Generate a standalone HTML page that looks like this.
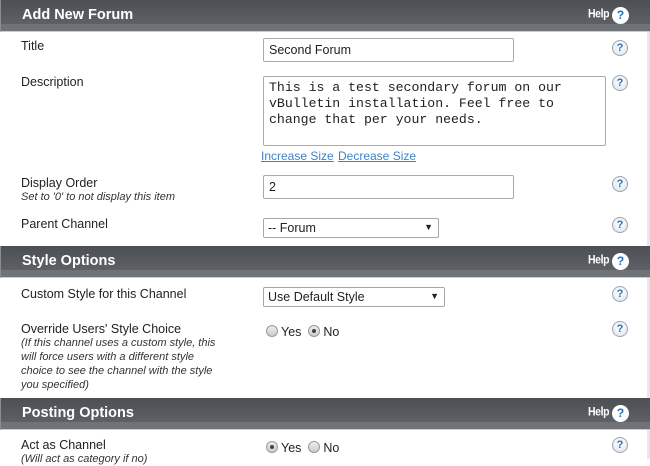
<!DOCTYPE html>
<html><head><meta charset="utf-8"><style>
*{margin:0;padding:0;box-sizing:border-box}
body{width:650px;height:459px;overflow:hidden;background:#fff;font-family:"Liberation Sans",Arial,sans-serif;position:relative;font-size:12px;color:#222}
.a{position:absolute}
.hd{position:absolute;left:0;width:650px;height:32px;background:linear-gradient(#4c4f54,#5d6065 78%,#6f7277 78%,#6f7277);border-left:1px solid #8a8d92;border-bottom:1px solid #c8ccd2}
.hd b{position:absolute;left:21px;top:7px;color:#fff;font-size:14.5px;font-weight:bold}
.hd .h{position:absolute;left:587px;top:8px;color:#fff;font-size:10.5px;font-weight:bold;letter-spacing:-0.4px;transform:scaleY(1.15)}
.hd .q{position:absolute;left:611px;top:7px;width:17px;height:17px;border-radius:50%;background:#fff;color:#1d70c0;font-size:12px;font-weight:bold;text-align:center;line-height:17px}
.q2{position:absolute;left:612px;width:16px;height:16px;border-radius:50%;background:radial-gradient(circle at 50% 35%,#fff,#dde3ea);border:1px solid #9aa7b5;color:#2a6fb8;font-size:11px;font-weight:bold;text-align:center;line-height:14px}
.lb{position:absolute;left:21px;font-size:12.5px;color:#222}
.sub{font-size:11px;font-style:italic;color:#333;line-height:14px}
.in{position:absolute;left:263px;height:24px;border:1px solid #aaa;border-radius:2px;font-size:12.5px;padding:4px 5px;background:#fff}
.sel{position:absolute;left:263px;height:20px;border:1px solid #a6a6a6;border-radius:2px;font-size:12.5px;padding:2px 4px;background:#fff}
.sel:after{content:"▼";position:absolute;right:5px;top:3px;font-size:9px}
.r{display:inline-block;width:12px;height:12px;border-radius:50%;border:1px solid #999;background:linear-gradient(#eee,#ccc);vertical-align:-1px;position:relative;margin-right:3px}
.r.on:after{content:"";position:absolute;left:3px;top:3px;width:4px;height:4px;border-radius:50%;background:#444}
.rad{position:absolute;left:266px;font-size:12.5px}
.rb{position:absolute;right:0;top:0;width:3px;height:459px;background:#e6e8eb}
</style></head><body>
<div class="rb"></div>
<div class="hd" style="top:0"><b>Add New Forum</b><span class="h">Help</span><span class="q">?</span></div>
<div class="lb" style="top:39px">Title</div>
<div class="in" style="top:38px;width:251px">Second Forum</div>
<div class="q2" style="top:40px">?</div>
<div class="lb" style="top:75px">Description</div>
<div class="a" style="left:263px;top:76px;width:343px;height:70px;border:1px solid #aaa;border-radius:2px;font-family:'Liberation Mono',monospace;font-size:13.2px;line-height:16px;padding:3px 5px;white-space:nowrap">This is a test secondary forum on our<br>vBulletin installation. Feel free to<br>change that per your needs.</div>
<div class="q2" style="top:75px">?</div>
<div class="a" style="left:261px;top:149px;font-size:12px;color:#3b83c8;text-decoration:underline">Increase Size</div>
<div class="a" style="left:338px;top:149px;font-size:12px;color:#3b83c8;text-decoration:underline">Decrease Size</div>
<div class="lb" style="top:176px">Display Order<div class="sub" style="margin-top:0">Set to '0' to not display this item</div></div>
<div class="in" style="top:175px;width:251px">2</div>
<div class="q2" style="top:176px">?</div>
<div class="lb" style="top:217px">Parent Channel</div>
<div class="sel" style="top:218px;width:176px">-- Forum</div>
<div class="q2" style="top:217px">?</div>

<div class="hd" style="top:246px"><b>Style Options</b><span class="h">Help</span><span class="q">?</span></div>
<div class="lb" style="top:287px">Custom Style for this Channel</div>
<div class="sel" style="top:287px;width:182px">Use Default Style</div>
<div class="q2" style="top:286px">?</div>
<div class="lb" style="top:322px">Override Users' Style Choice<div class="sub">(If this channel uses a custom style, this<br>will force users with a different style<br>choice to see the channel with the style<br>you specified)</div></div>
<div class="rad" style="top:325px"><span class="r"></span>Yes &nbsp;<span class="r on"></span>No</div>
<div class="q2" style="top:321px">?</div>

<div class="hd" style="top:398px"><b>Posting Options</b><span class="h">Help</span><span class="q">?</span></div>
<div class="lb" style="top:438px">Act as Channel<div class="sub">(Will act as category if no)</div></div>
<div class="rad" style="top:441px"><span class="r on"></span>Yes &nbsp;<span class="r"></span>No</div>
<div class="q2" style="top:437px">?</div>
</body></html>
